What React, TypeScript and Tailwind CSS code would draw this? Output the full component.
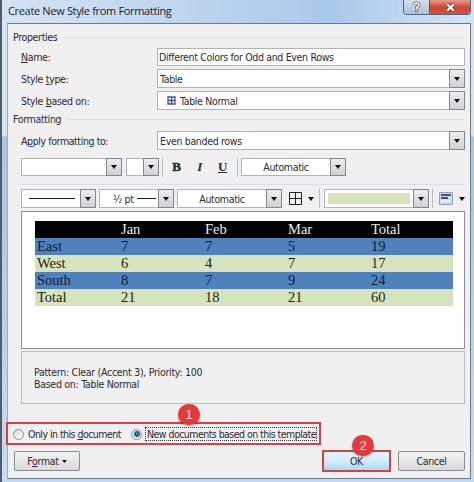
import type { ReactNode } from "react";
import clsx from "clsx";

interface ComboProps {
  className?: string;
  children?: ReactNode;
}

const rows = [
  ["East", "7", "7", "5", "19"],
  ["West", "6", "4", "7", "17"],
  ["South", "8", "7", "9", "24"],
  ["Total", "21", "18", "21", "60"],
];

function Arrow() {
  return (
    <svg className="h-[4px] w-[6px] shrink-0" viewBox="0 0 6 4">
      <path d="M0 0h6L3 4z" fill="#111" />
    </svg>
  );
}

function Combo({ className, children }: ComboProps) {
  return (
    <div className={clsx("flex border border-[#b4b4b6] bg-white", className)}>
      <div className="flex min-w-0 flex-1 items-center whitespace-nowrap">{children}</div>
      <div className="-my-px -mr-px flex w-4 shrink-0 items-center justify-center border border-[#85878c] bg-linear-to-b from-[#eeeeef] to-[#cfd0d4]">
        <Arrow />
      </div>
    </div>
  );
}

function GroupTitle({ children }: { children: ReactNode }) {
  return (
    <div className="flex h-3 items-center gap-1.5 pr-[6px] pl-[5px]">
      <span>{children}</span>
      <span className="h-px flex-1 bg-[#dedfe1]" />
    </div>
  );
}

function Separator({ className }: { className?: string }) {
  return <div className={clsx("h-[19px] w-px shrink-0 bg-[#bcbcbe]", className)} />;
}

function Callout({ className, children }: { className: string; children: ReactNode }) {
  return (
    <div
      className={clsx(
        "absolute flex h-[21px] w-[22px] items-center justify-center rounded-full bg-[#e23b3d] font-['Liberation_Sans',sans-serif] text-[13px] leading-none text-[#fbe3e3] shadow-[0_1px_2px_#00000055]",
        className
      )}
    >
      {children}
    </div>
  );
}

export default function App() {
  return (
    <div className="relative flex h-[482px] w-[474px] overflow-hidden bg-[#c3d9ef] font-['DejaVu_Sans_Condensed','DejaVu_Sans',sans-serif] text-[10.5px] leading-3 tracking-[-0.33px] text-[#2b2b30]">
      <div className="w-[2px] bg-[#555b65]" />
      <div className="flex w-[472px] flex-col bg-linear-to-b from-[#cfe0f2] from-0% via-[#d6e5f4] via-28% to-[#c2d9ef]">
        {/* Title bar */}
        <div className="flex h-[23px] shrink-0 items-start bg-linear-to-r from-[#d5e3f2] via-[#a9c9ea] via-70% to-[#d3e4f5] pl-[6px]">
          <h1 className="mt-[3px] flex-1 font-['Open_Sans','Noto_Sans',sans-serif] text-[11px] leading-4 tracking-[-0.33px] text-[#20242c]">
            Create New Style from Formatting
          </h1>
          <div className="mr-[3px] flex h-[15px] w-[68px] overflow-hidden rounded-b-[4px] border border-t-0 border-[#53657c]">
            <div className="flex w-[25px] items-center justify-center bg-linear-to-b from-[#d4deeb] to-[#adc0d8]">
              <svg className="h-[13px] w-[11px]" viewBox="0 0 11 13" fill="none">
                <path d="M3 4Q3 2 5.500 2T8 4.200Q8 5.500 5.500 6.500V8" stroke="#5b6470" strokeWidth="3" />
                <path d="M3 4Q3 2 5.500 2T8 4.200Q8 5.500 5.500 6.500V8" stroke="#fff" strokeWidth="1.500" />
                <path d="M4.500 9h2v2h-2z" fill="#fff" stroke="#5b6470" strokeWidth=".8" />
              </svg>
            </div>
            <div className="flex flex-1 items-center justify-center border-l border-[#76454a] bg-linear-to-b from-[#e19a8c] via-[#cf4732] to-[#d0543f]">
              <svg className="h-[9px] w-[11px]" viewBox="0 0 11 9" fill="none">
                <path d="M2 1l7 7M9 1L2 8" stroke="#733a38" strokeWidth="3.800" />
                <path d="M2.200 1.200l6.600 6.600M8.800 1.200L2.200 7.800" stroke="#fff" strokeWidth="2.200" />
              </svg>
            </div>
          </div>
        </div>

        <div className="flex h-[456px] bg-linear-to-b from-[#d6e5f4] from-[113px] via-[#a9c4df] via-[114px] to-[#c6dcf1]">
          {/* Dialog body */}
          <div className="ml-[5px] flex h-[456px] w-[464px] flex-col border border-[#707986] border-l-[#9dabbb] bg-[#f0f0f1] pt-[7px]">
            <GroupTitle>Properties</GroupTitle>

            <div className="mt-[5px] flex h-[18px] items-center pr-[5px] pl-[13px]">
              <span className="w-[136px]"><u>N</u>ame:</span>
              <div className="flex h-[18px] flex-1 items-center border border-[#b4b4b6] bg-white pl-px">
                Different Colors for Odd and Even Rows
              </div>
            </div>
            <div className="mt-[3px] flex h-[19px] items-center pr-[5px] pl-[13px]">
              <span className="w-[136px]">Style <u>t</u>ype:</span>
              <Combo className="h-[19px] flex-1"><span className="pl-[2px]">Table</span></Combo>
            </div>
            <div className="mt-[3px] flex h-[19px] items-center pr-[5px] pl-[13px]">
              <span className="w-[136px]">Style <u>b</u>ased on:</span>
              <Combo className="h-[19px] flex-1">
                <svg className="mr-1 ml-[9px] h-[9px] w-[9px]" viewBox="0 0 9 9" fill="none">
                  <path d="M1 1h7v7H1zM4.500 1v7M1 4.500h7" stroke="#3e4f9e" strokeWidth="1.300" />
                </svg>
                <span>Table Normal</span>
              </Combo>
            </div>

            <div className="mt-[3px]"><GroupTitle>Formatting</GroupTitle></div>

            <div className="mt-[6px] flex h-[19px] items-center pr-[5px] pl-[13px]">
              <span className="w-[136px] tracking-[-0.4px]">A<u>p</u>ply formatting to:</span>
              <Combo className="h-[19px] flex-1"><span className="pl-[2px]">Even banded rows</span></Combo>
            </div>

            {/* Font toolbar */}
            <div className="mt-2 flex h-[18px] items-center pl-[13px] font-['Liberation_Serif',serif] text-[13px]">
              <Combo className="h-[18px] w-[101px]" />
              <Combo className="ml-1 h-[18px] w-[33px]" />
              <Separator className="ml-[3px]" />
              <b className="ml-[2px] w-[23px] text-center [-webkit-text-stroke:0.5px]">B</b>
              <i className="w-[23px] text-center font-bold">I</i>
              <b className="w-[23px] text-center underline">U</b>
              <Separator className="ml-[3px]" />
              <Combo className="ml-[3px] h-[18px] w-[105px] font-['DejaVu_Sans_Condensed','DejaVu_Sans',sans-serif] text-[10.5px]">
                <span className="flex-1 text-center">Automatic</span>
              </Combo>
            </div>

            <div className="mt-[8px] mr-[5px] ml-[13px] h-px shrink-0 bg-[#dcdfe4]" />

            {/* Border and shading toolbar */}
            <div className="mt-[4px] flex h-[19px] items-center pl-[13px]">
              <Combo className="h-[19px] w-[75px]">
                <span className="ml-[7px] h-px w-[46px] bg-[#222]" />
              </Combo>
              <Combo className="ml-[3px] h-[19px] w-[75px]">
                <span className="ml-[13px]">½ pt</span>
                <span className="ml-[3px] h-px w-[19px] bg-[#222]" />
              </Combo>
              <Combo className="ml-[3px] h-[19px] w-[105px]">
                <span className="flex-1 text-center">Automatic</span>
              </Combo>
              <svg className="ml-[7px] h-[13px] w-[13px]" viewBox="0 0 13 13" fill="none">
                <path d="M.5 .5h12v12H.5zM6.500 .5v12M.5 6.500h12" stroke="#222" />
              </svg>
              <span className="mr-[5px] ml-[6px] flex"><Arrow /></span>
              <Separator />
              <Combo className="ml-[4px] h-[19px] w-[105px]">
                <span className="ml-[3px] h-[11px] w-[82px] bg-[#d7e3bc]" />
              </Combo>
              <Separator className="ml-[3px]" />
              <svg className="ml-[6px] h-[13px] w-[14px]" viewBox="0 0 14 13" fill="none">
                <path d="M.5 .5h13v12H.5z" fill="#c9daf3" stroke="#8e9fc0" />
                <path d="M2 3h10M2 6h7" stroke="#202a45" strokeWidth="1.300" />
                <path d="M2 9h9" stroke="#eef4fc" strokeWidth="2" />
              </svg>
              <span className="ml-[6px] flex"><Arrow /></span>
            </div>

            {/* Style preview */}
            <div className="mt-[3px] mr-[5px] ml-[13px] h-[138px] shrink-0 border border-[#8d8d8f] bg-white pt-[9px] pl-[13px] font-['Liberation_Serif',serif] text-[14.5px] leading-[17px] tracking-[0px]">
              <div className="grid w-[418px] grid-cols-[84px_84px_83px_83px_84px] bg-black text-[#f2ece8]">
                {["", "Jan", "Feb", "Mar", "Total"].map((name) => (
                  <span key={name} className="pl-[2px]">{name}</span>
                ))}
              </div>
              {rows.map((row, i) => (
                <div
                  key={row[0]}
                  className={clsx(
                    "grid h-[17px] w-[418px] grid-cols-[84px_84px_83px_83px_84px]",
                    i % 2 === 0 ? "bg-[#4f81bd] text-[#10203f]" : "bg-[#d7e3bc] text-[#1d1f18]"
                  )}
                >
                  {row.map((cell, j) => (
                    <span key={j} className="pl-[2px]">{cell}</span>
                  ))}
                </div>
              ))}
            </div>

            <div className="mt-[2px] mr-[5px] ml-[13px] h-[53px] shrink-0 border border-[#bcbcbe] pt-[14px] pl-3 tracking-[-0.28px]">
              <p>Pattern: Clear (Accent 3), Priority: 100</p>
              <p>Based on: Table Normal</p>
            </div>

            {/* Template scope */}
            <div className="mt-[22px] flex h-4 items-center pl-[5px] tracking-[-0.54px]">
              <span className="h-[11px] w-[11px] rounded-full border border-[#8e8f8f] bg-linear-to-br from-[#d5d7da] to-white" />
              <span className="ml-[4px] w-[98px] whitespace-nowrap">Only in this <u>d</u>ocument</span>
              <span className="ml-[5px] flex h-[11px] w-[11px] items-center justify-center rounded-full border border-[#8e8f8f] bg-[#e4eaf0]">
                <span className="h-[6px] w-[6px] rounded-full border border-[#173d5b] bg-[#2b86ae]" />
              </span>
              <span className="ml-[3px] flex h-[14px] w-[172px] items-center border border-dotted border-[#333] pl-px whitespace-nowrap">
                New documents based on this template
              </span>
            </div>

            {/* Footer buttons */}
            <div className="mt-[8px] flex h-[22px] items-center pr-[5px] pl-[6px]">
              <button className="flex h-5 w-[66px] items-center justify-center gap-[3px] rounded-[2px] border border-[#8c8c8e] bg-linear-to-b from-[#f4f4f4] to-[#d8d8da]">
                <span>F<u>o</u>rmat</span>
                <svg className="h-[3px] w-[5px]" viewBox="0 0 5 3"><path d="M0 0h5L2.500 3z" fill="#111" /></svg>
              </button>
              <button className="ml-auto h-[22px] w-[69px] border-2 border-[#dc3f43] bg-linear-to-b from-[#e8f5fc] via-[#d2ecfa] to-[#a9d9f2]">
                OK
              </button>
              <button className="ml-[7px] h-5 w-[67px] rounded-[2px] border border-[#8c8c8e] bg-linear-to-b from-[#f4f4f4] to-[#d8d8da]">
                Cancel
              </button>
            </div>
          </div>
        </div>
      </div>

      {/* Step markers */}
      <div className="absolute top-[422px] left-[6px] h-[23px] w-[315px] border-2 border-[#dc3f43]" />
      <Callout className="top-[404px] left-[178px]">1</Callout>
      <Callout className="top-[435px] left-[352px]">2</Callout>
    </div>
  );
}
